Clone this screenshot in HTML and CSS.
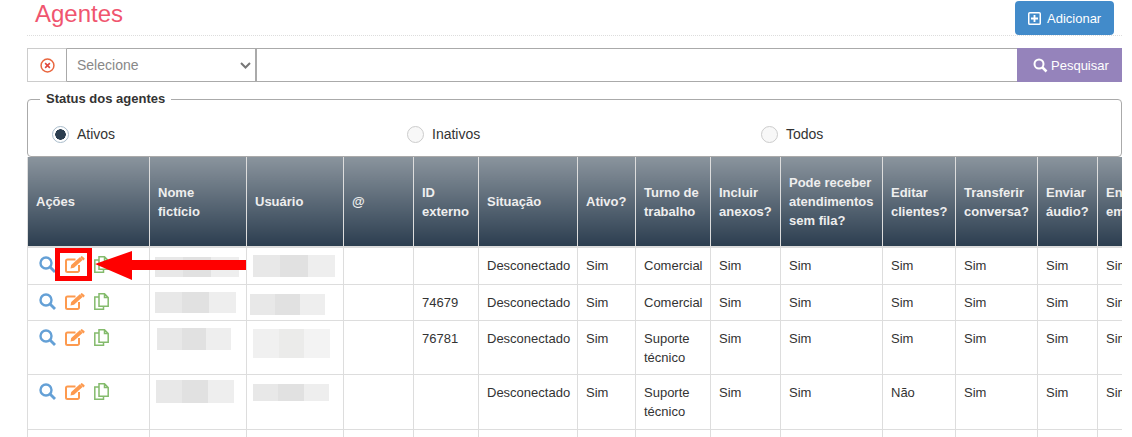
FILE: index.html
```html
<!DOCTYPE html>
<html lang="pt-BR">
<head>
    <meta charset="UTF-8">
    <title>Agentes</title>
    <link rel="stylesheet" href="styles.css">
</head>
<body>

    <!-- Icons used in every table row -->
    <svg class="defs" width="0" height="0">
        <symbol id="i-search" viewBox="0 0 17 17"><circle cx="7" cy="7" r="5.500" fill="none" stroke="#64a0d6" stroke-width="2.400"/><path d="M11 11l5 5" stroke="#64a0d6" stroke-width="2.800"/></symbol>
        <symbol id="i-edit" viewBox="0 0 20 17"><path d="M14 9v5.500a1.500 1.500 0 0 1-1.500 1.500h-10A1.500 1.500 0 0 1 1 14.500V5a1.500 1.500 0 0 1 1.500-1.500h8" fill="none" stroke="#fd9a4f" stroke-width="2"/><path fill="#fd9a4f" d="M5.500 12.500l.7-3.500L14.800 1.300l2.800 2.800-8.600 7.700zM16 .4a1 1 0 0 1 1.400 0l1.900 1.700a1 1 0 0 1 0 1.400l-.9.900-3-2.900z"/></symbol>
        <symbol id="i-copy" viewBox="0 0 15 17"><path d="M5 .8h5.500L14.200 4.500v8.700H5zM10.500.8v3.700h3.700" fill="#fff" stroke="#84bb6c" stroke-width="1.500"/><path d="M5 4H.8v12.200h8.700v-3" fill="none" stroke="#84bb6c" stroke-width="1.500"/></symbol>
    </svg>

    <!-- Page heading -->
    <div class="page-header">
        <h1 class="title">Agentes</h1>
        <button class="btn-add">
            <svg class="btn-icon" viewBox="0 0 14 14"><path fill="#fff" fill-rule="evenodd" d="M2 0h10a2 2 0 0 1 2 2v10a2 2 0 0 1-2 2H2a2 2 0 0 1-2-2V2a2 2 0 0 1 2-2zm0 1.600a.4.4 0 0 0-.4.4v10c0 .2.2.4.4.4h10c.2 0 .4-.2.4-.4V2a.4.4 0 0 0-.4-.4zM6 3.200h2V6h2.800v2H8v2.800H6V8H3.200V6H6z"/></svg>
            Adicionar
        </button>
    </div>

    <!-- Search bar -->
    <div class="search-bar">
        <div class="search-clear">
            <svg width="15" height="15" viewBox="0 0 14 14"><circle cx="7" cy="7" r="6" fill="none" stroke="#e9663f" stroke-width="1.400"/><path d="M4.800 4.800l4.400 4.400M9.200 4.800l-4.400 4.400" stroke="#e0483f" stroke-width="1.500"/></svg>
        </div>
        <div class="search-select">
            <span>Selecione</span>
            <svg width="11" height="7" viewBox="0 0 11 7"><path d="M1 1l4.500 4.500L10 1" fill="none" stroke="#777" stroke-width="2"/></svg>
        </div>
        <div class="search-input"></div>
        <button class="btn-search">
            <svg width="15" height="15" viewBox="0 0 15 15"><circle cx="6" cy="6" r="4.500" fill="none" stroke="#fff" stroke-width="2"/><path d="M9.500 9.500l4 4" stroke="#fff" stroke-width="2.500"/></svg>
            Pesquisar
        </button>
    </div>

    <!-- Status filter -->
    <fieldset class="status">
        <legend>Status dos agentes</legend>
        <label class="radio"><span class="dot checked"></span>Ativos</label>
        <label class="radio"><span class="dot"></span>Inativos</label>
        <label class="radio"><span class="dot"></span>Todos</label>
    </fieldset>

    <!-- Agents table -->
    <div class="table-wrap">
        <table class="agents">
            <colgroup>
                <col class="c122"><col class="c97"><col class="c97"><col class="c70">
                <col class="c65"><col class="c99"><col class="c58"><col class="c75">
                <col class="c70"><col class="c102"><col class="c73"><col class="c82">
                <col class="c60"><col class="c80">
            </colgroup>
            <thead>
                <tr>
                    <th>Ações</th><th>Nome fictício</th><th>Usuário</th><th>@</th><th>ID externo</th>
                    <th>Situação</th><th>Ativo?</th><th>Turno de trabalho</th><th>Incluir anexos?</th>
                    <th>Pode receber atendimentos sem fila?</th><th>Editar clientes?</th>
                    <th>Transferir conversa?</th><th>Enviar áudio?</th><th>Enviar email?</th>
                </tr>
            </thead>
            <tbody>
                <tr class="r37">
                    <td><div class="actions"><svg class="ic-s"><use href="#i-search"/></svg><svg class="ic-e"><use href="#i-edit"/></svg><svg class="ic-c"><use href="#i-copy"/></svg></div></td>
                    <td></td><td></td><td></td><td></td>
                    <td>Desconectado</td><td>Sim</td><td>Comercial</td><td>Sim</td><td>Sim</td><td>Sim</td><td>Sim</td><td>Sim</td><td>Sim</td>
                </tr>
                <tr class="r36">
                    <td><div class="actions"><svg class="ic-s"><use href="#i-search"/></svg><svg class="ic-e"><use href="#i-edit"/></svg><svg class="ic-c"><use href="#i-copy"/></svg></div></td>
                    <td></td><td></td><td></td><td>74679</td>
                    <td>Desconectado</td><td>Sim</td><td>Comercial</td><td>Sim</td><td>Sim</td><td>Sim</td><td>Sim</td><td>Sim</td><td>Sim</td>
                </tr>
                <tr class="r54">
                    <td><div class="actions"><svg class="ic-s"><use href="#i-search"/></svg><svg class="ic-e"><use href="#i-edit"/></svg><svg class="ic-c"><use href="#i-copy"/></svg></div></td>
                    <td></td><td></td><td></td><td>76781</td>
                    <td>Desconectado</td><td>Sim</td><td>Suporte técnico</td><td>Sim</td><td>Sim</td><td>Sim</td><td>Sim</td><td>Sim</td><td>Sim</td>
                </tr>
                <tr class="r55">
                    <td><div class="actions"><svg class="ic-s"><use href="#i-search"/></svg><svg class="ic-e"><use href="#i-edit"/></svg><svg class="ic-c"><use href="#i-copy"/></svg></div></td>
                    <td></td><td></td><td></td><td></td>
                    <td>Desconectado</td><td>Sim</td><td>Suporte técnico</td><td>Sim</td><td>Sim</td><td>Não</td><td>Sim</td><td>Sim</td><td>Sim</td>
                </tr>
                <tr class="r30">
                    <td></td><td></td><td></td><td></td><td></td><td></td><td></td><td></td><td></td><td></td><td></td><td></td><td></td><td></td>
                </tr>
            </tbody>
        </table>
    </div>

    <!-- Blurred-out names, they lie over the table -->
    <div class="blur b1"><i></i><i></i><i></i></div>
    <div class="blur b2"><i></i><i></i><i></i></div>
    <div class="blur b3"><i></i><i></i><i></i></div>
    <div class="blur b4"><i></i><i></i><i></i></div>
    <div class="blur b5"><i></i><i></i><i></i></div>
    <div class="blur b6"><i></i><i></i><i></i></div>
    <div class="blur b7"><i></i><i></i><i></i></div>
    <div class="blur b8"><i></i><i></i><i></i></div>

    <!-- Annotation over the table -->
    <div class="highlight"></div>
    <svg class="arrow" width="151" height="29" viewBox="0 0 151 29"><path fill="#f00" d="M0 13L37 0v9h114v10H37v10z"/></svg>

</body>
</html>
```

FILE: styles.css
```css
/* General page styling */
html, body {
    height: 437px;
    overflow: hidden;
}

body {
    position: relative;
    margin: 0;
    padding: 0 10px 0 27px;
    font-family: "Liberation Sans", Arial, sans-serif;
    font-size: 14px;
    color: #333;
    background: #fff;
}

.defs {
    position: absolute;
}

/* Heading row */
.page-header {
    display: flex;
    justify-content: space-between;
    height: 35px;
    padding-right: 8px;
    border-bottom: 1px dotted #ddd;
}

.title {
    margin: 0 0 0 8px;
    font-size: 24px;
    font-weight: 400;
    line-height: 27px;
    color: #f0556f;
}

.btn-add {
    display: flex;
    align-items: center;
    gap: 6px;
    width: 99px;
    height: 34px;
    margin-top: 1px;
    padding: 0 0 0 13px;
    border: 0;
    border-radius: 4px;
    background: #428bca;
    color: #fff;
    font: 13px "Liberation Sans", Arial, sans-serif;
}

.btn-icon {
    width: 13px;
    height: 13px;
}

/* Search bar */
.search-bar {
    display: flex;
    height: 34px;
    margin-top: 12px;
}

.search-clear {
    display: flex;
    align-items: center;
    justify-content: center;
    width: 40px;
    border: 1px solid #ccc;
    border-right-color: #aaa;
    box-sizing: border-box;
}

.search-select {
    display: flex;
    align-items: center;
    justify-content: space-between;
    width: 190px;
    padding: 0 4px 0 10px;
    box-sizing: border-box;
    border: 1px solid #aaa;
    border-left: 0;
    border-right-width: 2px;
    color: #888;
}

.search-input {
    flex: 1;
    border: 1px solid #aaa;
    border-left: 0;
    border-right: 0;
}

.btn-search {
    display: flex;
    align-items: center;
    gap: 3px;
    width: 105px;
    padding: 0 0 0 16px;
    border: 0;
    background: #9583bb;
    color: #fff;
    font: 13px "Liberation Sans", Arial, sans-serif;
}

/* Status filter */
.status {
    display: grid;
    grid-template-columns: 355px 354px 1fr;
    align-items: center;
    height: 66px;
    margin: 9px 0 0;
    padding: 0 0 0 24px;
    box-sizing: border-box;
    border: 1px solid #aaa;
    border-radius: 4px;
}

.status legend {
    margin-left: -12px;
    padding: 0 6px;
    font-size: 13px;
    font-weight: 700;
    line-height: 16px;
}

.radio {
    display: flex;
    align-items: center;
    gap: 8px;
    margin-top: 5px;
}

.dot {
    width: 15px;
    height: 15px;
    border: 1px solid #ccc;
    border-radius: 50%;
    background: #f8f8f8;
}

.dot.checked {
    border-color: #a9bccb;
    background: radial-gradient(circle, #2c3e50 0 5px, #fff 5.5px);
}

/* Agents table */
.table-wrap {
    width: 1095px;
    height: 281px;
    overflow: hidden;
}

.agents {
    width: 1150px;
    table-layout: fixed;
    border-collapse: collapse;
    border-left: 1px solid #ddd;
}

.c58 { width: 58px; }
.c60 { width: 60px; }
.c65 { width: 65px; }
.c70 { width: 70px; }
.c73 { width: 73px; }
.c75 { width: 75px; }
.c80 { width: 80px; }
.c82 { width: 82px; }
.c97 { width: 97px; }
.c99 { width: 99px; }
.c102 { width: 102px; }
.c122 { width: 122px; }

.r30 { height: 30px; }
.r36 { height: 36px; }
.r37 { height: 37px; }
.r54 { height: 54px; }
.r55 { height: 55px; }

.agents th {
    height: 89px;
    padding: 0 8px;
    border: 1px solid #ddd;
    border-top: 0;
    border-bottom-width: 2px;
    background: linear-gradient(#8a949d, #2c3e50);
    color: #eee;
    font-size: 13px;
    font-weight: 700;
    line-height: 19px;
    text-align: left;
}

.agents td {
    padding: 8px 8px 7px;
    border: 1px solid #ddd;
    line-height: 19px;
    font-size: 13px;
    vertical-align: top;
}

/* Row icons */
.actions {
    display: flex;
    gap: 9px;
    padding-left: 3px;
}

.actions svg {
    display: block;
    height: 17px;
}

.ic-s { width: 17px; }
.ic-e { width: 20px; }
.ic-c { width: 15px; }

/* Blurred-out cells */
.blur {
    position: absolute;
    display: flex;
}

.blur i {
    flex: 1;
    background: #e8e8e8;
}

.blur i:nth-child(2) { background: #e1e1e1; }
.blur i:nth-child(3) { background: #eeeeee; }

.b1 { left: 155px; top: 257px; width: 84px; height: 20px; }
.b2 { left: 253px; top: 255px; width: 82px; height: 22px; }
.b3 { left: 155px; top: 292px; width: 81px; height: 21px; }
.b4 { left: 250px; top: 294px; width: 75px; height: 21px; }
.b5 { left: 157px; top: 328px; width: 74px; height: 22px; }
.b6 { left: 253px; top: 329px; width: 77px; height: 29px; }
.b7 { left: 156px; top: 380px; width: 78px; height: 23px; }
.b8 { left: 253px; top: 384px; width: 76px; height: 17px; }

.b6 i { background: #f0f0f0; }
.b6 i:nth-child(2) { background: #ebebea; }
.b6 i:nth-child(3) { background: #f3f3f3; }

/* Red annotation */
.highlight {
    position: absolute;
    left: 55px;
    top: 248px;
    width: 27px;
    height: 23px;
    border: 5px solid #f00;
}

.arrow {
    position: absolute;
    left: 95px;
    top: 251px;
}
```
